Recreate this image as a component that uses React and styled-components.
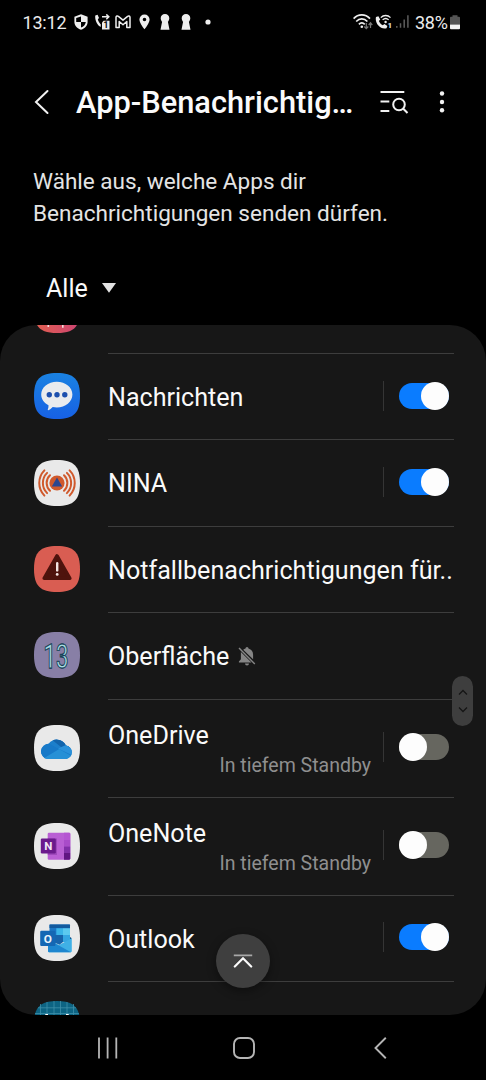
import styled, { createGlobalStyle } from 'styled-components'

const SQUIRCLE = 'M23 0C39.8 0 46 6.2 46 23S39.8 46 23 46 0 39.8 0 23 6.2 0 23 0Z'

const MessagesIcon = () => (
    <AppIcon viewBox="0 0 46 46">
        <defs>
            <linearGradient id="msg" x1="0" y1="0" x2="0" y2="1">
                <stop offset="0" stopColor="#1a82e2" />
                <stop offset="1" stopColor="#1761e4" />
            </linearGradient>
        </defs>
        <path d={SQUIRCLE} fill="url(#msg)" />
        <path d="M22.8 8.7c8.8 0 15.6 5.6 15.6 12.9s-6.8 12.9-15.6 12.9c-1.4 0-2.8-.1-4.1-.4-1.3 1.5-3 2.7-4.4 3.1-.6.1-.7-.4-.4-.9.5-1.2.7-2.7.6-4C10 30 7.2 26.3 7.2 21.6 7.2 14.3 14 8.7 22.8 8.7Z" fill="#e9ebee" />
        <g fill="#1c4fae">
            <circle cx="15.3" cy="21.7" r="2.7" />
            <circle cx="23" cy="21.7" r="2.7" />
            <circle cx="30.8" cy="21.7" r="2.7" />
        </g>
    </AppIcon>
)

const NinaIcon = () => (
    <AppIcon viewBox="0 0 46 46">
        <path d={SQUIRCLE} fill="#e9e9e9" />
        <g fill="none" stroke="#d0592c" strokeWidth="2" strokeLinecap="round">
            <path d="M10.4 10.4A18 18 0 0 0 10.4 35.6" />
            <path d="M13.1 12.9A14.2 14.2 0 0 0 13.1 33.1" />
            <path d="M16 15.3A10.5 10.5 0 0 0 16 30.7" />
            <path d="M35.6 10.4A18 18 0 0 1 35.6 35.6" />
            <path d="M32.9 12.9A14.2 14.2 0 0 1 32.9 33.1" />
            <path d="M30 15.3A10.5 10.5 0 0 1 30 30.7" />
        </g>
        <circle cx="23" cy="23" r="7.6" fill="#d0592c" />
        <path d="M23 17.6L28.2 26.6H17.8Z" fill="#2c468f" />
    </AppIcon>
)

const EmergencyIcon = () => (
    <AppIcon viewBox="0 0 46 46">
        <path d={SQUIRCLE} fill="#d95d52" />
        <path d="M23 10L35.8 32.3H10.2Z" fill="#4e130d" stroke="#4e130d" strokeWidth="3.6" strokeLinejoin="round" />
        <path d="M23.2 17.3V24.4" stroke="#f3e4e2" strokeWidth="2.4" strokeLinecap="round" />
        <circle cx="23.2" cy="28.4" r="1.4" fill="#f3e4e2" />
    </AppIcon>
)

const SystemUiIcon = () => (
    <AppIcon viewBox="0 0 46 46">
        <path d={SQUIRCLE} fill="#887fa6" />
        <g fontFamily="Roboto, sans-serif" fontSize="33" fontWeight="400" textAnchor="middle">
            <text x="22" y="35.6" textLength="25" lengthAdjust="spacingAndGlyphs" fill="#173f55" stroke="#173f55" strokeWidth="1.4">13</text>
            <text x="22" y="35.6" textLength="25" lengthAdjust="spacingAndGlyphs" fill="#a8dbe4" stroke="#173f55" strokeWidth=".8">13</text>
        </g>
    </AppIcon>
)

const OneDriveIcon = () => (
    <AppIcon viewBox="0 0 46 46">
        <defs>
            <clipPath id="cloud">
                <path d="M13.5 34A7.7 7.7 0 0 1 14.6 18.7 10.2 10.2 0 0 1 32 20.4 6.9 6.9 0 0 1 32.3 34Z" />
            </clipPath>
        </defs>
        <path d={SQUIRCLE} fill="#e9e9e9" />
        <g clipPath="url(#cloud)">
            <path d="M0 0H46V46H0Z" fill="#1c7fcb" />
            <path d="M12 10H36V25L27 22Z" fill="#1264ac" />
            <path d="M24 23.5L32 20 42 22V32Z" fill="#2a91da" />
            <path d="M10 33L25 24 39 32V36H10Z" fill="#2690d6" />
            <path d="M5 25L14 18 25 24 10 33Z" fill="#1779c8" />
        </g>
    </AppIcon>
)

const OneNoteIcon = () => (
    <AppIcon viewBox="0 0 46 46">
        <path d={SQUIRCLE} fill="#e9e9e9" />
        <rect x="13.7" y="9.7" width="22.6" height="27" rx="1.2" fill="#b95fd4" />
        <path d="M30 9.7h5.2a1.1 1.1 0 0 1 1.1 1.1V17H30Z" fill="#b556d2" />
        <path d="M30 17h6.3v6.5H30Z" fill="#a94cc9" />
        <path d="M30 23.5h6.3V30H30Z" fill="#812fa8" />
        <path d="M30 30h6.3v5.6a1.1 1.1 0 0 1-1.1 1.1H30Z" fill="#611583" />
        <path d="M13.7 15.5H23V32H13.7Z" fill="#8d3bab" opacity=".6" />
        <rect x="6.8" y="15.5" width="15" height="15" rx="1.2" fill="#6a1a8c" />
        <text x="14.3" y="27.1" fontFamily="Roboto, sans-serif" fontSize="11.5" fontWeight="700" textAnchor="middle" fill="#f1e6f5">N</text>
    </AppIcon>
)

const OutlookIcon = () => (
    <AppIcon viewBox="0 0 46 46">
        <path d={SQUIRCLE} fill="#e9e9e9" />
        <path d="M15.5 10.6a1 1 0 0 1 1-1H35a1 1 0 0 1 1 1V25H15.5Z" fill="#1b76c4" />
        <path d="M15.5 9.6H36V13H15.5Z" fill="#125a9e" />
        <path d="M22.3 13.2H29V20H22.3Z" fill="#3ab4e8" />
        <path d="M29 13.2H36V20H29Z" fill="#5cc9ef" />
        <path d="M29 20H36V27H29Z" fill="#35a6e2" />
        <path d="M36 22L37.8 23.2 36 24.4Z" fill="#114a80" />
        <path d="M14 24.5L25 30 37.8 23.2V36a1.2 1.2 0 0 1-1.2 1.2H15.2A1.2 1.2 0 0 1 14 36Z" fill="#3fb0e6" />
        <path d="M14 24.5L37 37.2H15.2A1.2 1.2 0 0 1 14 36Z" fill="#1e86cf" />
        <path d="M19 20H29V27L25.5 29.8 19 27Z" fill="#1764ac" />
        <rect x="6.2" y="15.7" width="15.2" height="15.2" rx="1.2" fill="#1467b4" />
        <text x="13.8" y="27.5" fontFamily="Roboto, sans-serif" fontSize="11.8" fontWeight="700" textAnchor="middle" fill="#eaf3fa">O</text>
    </AppIcon>
)

// only the lower edge of this one is visible above the first divider
const GalleryIcon = () => (
    <AppIcon viewBox="0 0 46 46">
        <defs>
            <linearGradient id="pink" x1="0" y1="0" x2="1" y2="0">
                <stop offset="0" stopColor="#e2604f" />
                <stop offset="1" stopColor="#cc4473" />
            </linearGradient>
        </defs>
        <path d={SQUIRCLE} fill="url(#pink)" />
        <path d="M14.3 37V40M28.8 36V40.8" stroke="#f4dede" strokeWidth="1.6" />
    </AppIcon>
)

const GridIcon = () => (
    <AppIcon viewBox="0 0 46 46">
        <path d={SQUIRCLE} fill="#0d6483" />
        <path d="M6.5 3V20M13 1V20M20 0V20M26.5 0V20M33 1V20M39.5 3V20M4 6.8H42M1 12.5H45" stroke="#3f8fa9" strokeWidth=".8" />
        <path d="M11.3 13.6H14M32 13.6H34.7" stroke="#fff" strokeWidth="1.3" />
    </AppIcon>
)

const MutedBell = () => (
    <Bell viewBox="0 0 18 20">
        <path d="M7.5 2.6a1.5 1.5 0 0 1 3 0c3 .8 4.6 3.2 4.6 6.1v4.5L5.2 3.7c.7-.5 1.4-.9 2.3-1.1ZM2.9 6.1L13.5 16.5H.9v-1.1L2.9 13.2ZM7 17.5h4a2 2 0 0 1-4 0Z" fill="#858585" />
        <path d="M1 2L16.8 18" stroke="#858585" strokeWidth="1.4" />
    </Bell>
)

const apps = [
    { name: 'Nachrichten', icon: MessagesIcon, on: true },
    { name: 'NINA', icon: NinaIcon, on: true },
    { name: 'Notfallbenachrichtigungen für..', icon: EmergencyIcon },
    { name: 'Oberfläche', icon: SystemUiIcon, muted: true },
    { name: 'OneDrive', icon: OneDriveIcon, on: false, note: 'In tiefem Standby' },
    { name: 'OneNote', icon: OneNoteIcon, on: false, note: 'In tiefem Standby' },
    { name: 'Outlook', icon: OutlookIcon, on: true },
]

const AppRow = ({ app }) => {
    const Icon = app.icon
    return <Row $tall={!!app.note}>
        <Icon />
        <RowBody>
            <Texts $tall={!!app.note}>
                <Name>{app.name}{app.muted && <MutedBell />}</Name>
                {app.note && <Note>{app.note}</Note>}
            </Texts>
            {app.on !== undefined && <SwitchArea>
                <Switch $on={app.on}><Thumb /></Switch>
            </SwitchArea>}
        </RowBody>
    </Row>
}

const Keyhole = ({ gap }) => (
    <Glyph $w={10} $gap={gap} viewBox="0 0 10 16">
        <path d="M5 0C7.5 0 9.3 1.9 9.3 4.200 9.300 5.800 8.500 7 7.900 7.700L9.500 15.800H.5L2.100 7.700C1.500 7 .7 5.800 .7 4.200 .7 1.900 2.500 0 5 0Z" fill="#eee" />
    </Glyph>
)

const StatusBar = () => (
    <Status>
        <Clock>13:12</Clock>
        <Glyph $w={14} $gap={7} viewBox="0 0 14 16">
            <path d="M7 .3L13.6 2.7V8c0 3.7-2.8 6.5-6.6 7.7C3.2 14.5.4 11.7.4 8V2.700Z" fill="#eee" />
            <path d="M7 2.5V8H2.2V4ZM7 8H11.8c-.3 2.6-2.2 4.6-4.8 5.6Z" fill="#000" />
        </Glyph>
        <Glyph $w={15} $gap={7} viewBox="0 0 15 16">
            <path d="M.3 1.5L2.6.8 4 3.9 2.8 5.3c.5 2 1.5 3.7 3 5.2L5.7 13C2.3 11.3-.4 6 .3 1.5Z" fill="#eee" />
            <path d="M7 2.8H13.5M11.3.4L13.8 2.8 11.3 5.2" fill="none" stroke="#eee" strokeWidth="1.5" />
            <path d="M7 8.5L8.5 6.8H14.5V15.5H7Z" fill="#eee" />
            <text x="10.9" y="14.3" fontFamily="Roboto, sans-serif" fontSize="8.5" fontWeight="700" textAnchor="middle" fill="#000">1</text>
        </Glyph>
        <Glyph $w={16} $gap={5} viewBox="0 0 16 16">
            <path d="M1 13.5V3.2C1 2 2.5 1.6 3.4 2.4L8 6.2l4.6-3.8C13.5 1.6 15 2 15 3.2V13.5H11.8V7.5L8 10.7 4.2 7.5v6Z" fill="none" stroke="#eee" strokeWidth="1.5" strokeLinejoin="round" />
        </Glyph>
        <Glyph $w={11} $gap={8} viewBox="0 0 11 16">
            <path fillRule="evenodd" d="M5.5.4a5.1 5.1 0 0 1 5.1 5.1c0 3.7-5.1 9.8-5.1 9.8S.4 9.2.4 5.500A5.100 5.100 0 0 1 5.500.4Zm0 3.300a1.800 1.800 0 1 0 0 3.600 1.800 1.800 0 0 0 0-3.600Z" fill="#eee" />
        </Glyph>
        <Keyhole gap={10} />
        <Keyhole gap={11} />
        <Glyph $w={6} $gap={14} viewBox="0 0 6 16">
            <circle cx="3" cy="8" r="2.6" fill="#eee" />
        </Glyph>
        <Spacer />
        <Glyph $w={20} viewBox="0 0 20 16">
            <g fill="none" stroke="#eee" strokeWidth="1.7">
                <path d="M.6 4.6C5.2-.4 12.3-.4 17 4.6" />
                <path d="M3.2 7.5c3.3-3.4 7.9-3.4 11.2 0" />
                <path d="M5.9 10.3c1.7-1.8 4.1-1.8 5.8 0" />
            </g>
            <circle cx="8.8" cy="12.7" r="1.3" fill="#eee" />
            <path d="M13.3 9V14.5M11.3 12.5L13.3 14.7 15.3 12.5M17.5 14V9M15.7 11L17.5 8.8 19.3 11" fill="none" stroke="#777" strokeWidth="1.2" />
        </Glyph>
        <Glyph $w={17} $gap={2} viewBox="0 0 17 16">
            <path d="M1 3L3.4 2.2 5.2 5.5 3.9 7c.7 1.9 2 3.4 3.9 4.3L9.4 10l3 2-.9 2.2C5.5 16-.5 9 1 3Z" fill="#eee" />
            <g fill="none" stroke="#eee" strokeWidth="1.3">
                <path d="M5.800 3.600c2.700-2.800 7-2.800 9.700 0" />
                <path d="M7.600 5.900c1.800-1.700 4.300-1.700 6.100 0" />
            </g>
            <circle cx="10.6" cy="8" r="1.2" fill="#eee" />
            <text x="14.8" y="14" fontFamily="Roboto, sans-serif" fontSize="8" fontWeight="700" textAnchor="middle" fill="#eee">1</text>
        </Glyph>
        <Glyph $w={13} $gap={4} viewBox="0 0 13 16">
            <path d="M.8 12V13.8M4.5 9.3V13.8M8.2 5.5V13.8M11.9 1.3V13.8" stroke="#5c5c5c" strokeWidth="1.5" />
        </Glyph>
        <Percent>38%</Percent>
        <Glyph $w={10} $gap={2} viewBox="0 0 10 16">
            <path d="M2.5 1.2h5v1.500H9A1 1 0 0 1 10 3.700V10.500H0V3.700A1 1 0 0 1 1 2.700H2.500Z" fill="#555" />
            <path d="M0 10.5H10V14.2a1 1 0 0 1-1 1H1A1 1 0 0 1 0 14.2Z" fill="#f4f4f4" />
        </Glyph>
    </Status>
)

const App = () => {
    return <Screen>
        <GlobalStyle />
        <StatusBar />
        <Header>
            <HeaderIcon $w={16} $h={28} viewBox="0 0 16 28">
                <path d="M14.500 2L3 13 14.500 24" fill="none" stroke="#f2f2f2" strokeWidth="2" strokeLinecap="round" />
            </HeaderIcon>
            <Title>App-Benachrichtig…</Title>
            <HeaderIcon $w={30} $h={26} viewBox="0 0 30 26">
                <g fill="none" stroke="#f2f2f2" strokeWidth="2">
                    <path d="M1.5 2H25.3M1.5 11.5H10.3M1.5 21H10.3" />
                    <circle cx="20" cy="14.5" r="5.8" />
                    <path d="M24.3 18.8L28.5 23" />
                </g>
            </HeaderIcon>
            <HeaderIcon $w={6} $h={26} viewBox="0 0 6 26">
                <g fill="#f2f2f2">
                    <circle cx="3" cy="3.5" r="2.2" />
                    <circle cx="3" cy="12" r="2.2" />
                    <circle cx="3" cy="20.2" r="2.2" />
                </g>
            </HeaderIcon>
        </Header>
        <Description>Wähle aus, welche Apps dir<br />Benachrichtigungen senden dürfen.</Description>
        <Filter>
            Alle
            <Caret viewBox="0 0 14 10"><path d="M0 0H14L7 9.7Z" fill="#e2e2e2" /></Caret>
        </Filter>
        <Panel>
            <List>
                <Row><GalleryIcon /><RowBody /></Row>
                {apps.map(app => <AppRow key={app.name} app={app} />)}
                <Row><GridIcon /><RowBody /></Row>
            </List>
            <ScrollHandle>
                <svg width="10" height="30" viewBox="0 0 10 30">
                    <path d="M1 8.5L5 4.5 9 8.5M1 21.5L5 25.5 9 21.5" fill="none" stroke="#151515" strokeWidth="1.3" />
                </svg>
            </ScrollHandle>
            <ToTop>
                <svg width="20" height="14" viewBox="0 0 20 14">
                    <path d="M.8 1.3H19.2" stroke="#a8a8a8" strokeWidth="1.8" />
                    <path d="M1.8 12.5L10 4.3 18.2 12.5" fill="none" stroke="#fafafa" strokeWidth="2.2" strokeLinecap="round" />
                </svg>
            </ToTop>
        </Panel>
        <NavBar>
            <svg width="22" height="22" viewBox="0 0 22 22">
                <path d="M2 .5V21.5M10.6 .5V21.5M19.3 .5V21.5" stroke="#b5b5b5" strokeWidth="1.8" />
            </svg>
            <HomeButton viewBox="0 0 22 22">
                <rect x="1" y="1" width="20" height="20" rx="6" fill="none" stroke="#b5b5b5" strokeWidth="1.9" />
            </HomeButton>
            <svg width="14" height="22" viewBox="0 0 14 22">
                <path d="M12.8 .8L2.5 11 12.8 21.2" fill="none" stroke="#b5b5b5" strokeWidth="1.9" />
            </svg>
        </NavBar>
    </Screen>
}

export default App;

const GlobalStyle = createGlobalStyle`
    body {
        margin: 0;
        background: #000;
    }

    svg {
        display: block;
        flex-shrink: 0;
    }
`

const Screen = styled.div`
    width: 486px;
    height: 1080px;
    overflow: hidden;
    display: flex;
    flex-direction: column;
    background: #000;
    color: #fafafa;
    font-family: Roboto, sans-serif;
`

const Status = styled.div`
    height: 44px;
    box-sizing: border-box;
    padding: 0 26px 0 22.5px;
    display: flex;
    align-items: center;
    color: #ececec;
    font-size: 18px;
`

const Clock = styled.span`
    width: 44.5px;
    white-space: nowrap;
    letter-spacing: -0.2px;
`

const Percent = styled.span`
    width: 33px;
    margin-left: 6px;
    white-space: nowrap;
    letter-spacing: -0.3px;
`

const Glyph = styled.svg`
    width: ${({ $w }) => $w}px;
    height: 16px;
    margin-left: ${({ $gap }) => $gap || 0}px;
`

const Spacer = styled.div`
    flex: 1;
`

const Header = styled.header`
    height: 117px;
    box-sizing: border-box;
    padding: 0 41px 0 33px;
    display: flex;
    align-items: center;
`

const HeaderIcon = styled.svg`
    width: ${({ $w }) => $w}px;
    height: ${({ $h }) => $h}px;

    & + & {
        margin-left: 30px;
    }
`

const Title = styled.h1`
    margin: 0 0 0 27px;
    width: 303px;
    font-size: 30.8px;
    font-weight: 500;
    white-space: nowrap;
`

const Description = styled.p`
    margin: 5px 0 0;
    padding: 0 33px;
    height: 64px;
    font-size: 22.55px;
    line-height: 32px;
    color: #e4e4e4;
    white-space: nowrap;
`

const Filter = styled.div`
    height: 95px;
    box-sizing: border-box;
    padding: 21px 0 0 46px;
    display: flex;
    align-items: center;
    gap: 14px;
    font-size: 25px;
`

const Caret = styled.svg`
    width: 14px;
    height: 10px;
`

const Panel = styled.main`
    position: relative;
    height: 690px;
    border-radius: 36px;
    background: #171717;
    overflow: hidden;
`

// scrolled so that the first row is cut off at the top
const List = styled.div`
    margin-top: -57.4px;
    padding: 0 32px 0 34px;
`

const Row = styled.div`
    height: ${({ $tall }) => ($tall ? 98 : 86.4)}px;
    display: flex;
    align-items: center;
    gap: 28px;
`

const AppIcon = styled.svg`
    width: 46px;
    height: 46px;
    margin: 0 0.4px 2px -0.4px;
`

const RowBody = styled.div`
    flex: 1;
    min-width: 0;
    height: 100%;
    box-sizing: border-box;
    border-bottom: 1px solid #3d3d3d;
    display: flex;
    align-items: center;
`

const Texts = styled.div`
    flex: 1;
    padding-top: ${({ $tall }) => ($tall ? 6.5 : 2.5)}px;
    display: flex;
    flex-direction: column;
`

const Name = styled.div`
    display: flex;
    align-items: center;
    gap: 9px;
    font-size: 25.1px;
    line-height: 30px;
    white-space: nowrap;
`

const Note = styled.div`
    padding-right: 12px;
    font-size: 19.5px;
    line-height: 30px;
    color: #8f8f8f;
    text-align: right;
    white-space: nowrap;
`

const Bell = styled.svg`
    width: 18px;
    height: 20px;
    margin-bottom: 3px;
`

const SwitchArea = styled.div`
    width: 71px;
    height: 30px;
    box-sizing: border-box;
    margin-bottom: 2px;
    padding-right: 5px;
    border-left: 1px solid #353535;
    display: flex;
    align-items: center;
    justify-content: flex-end;
`

const Switch = styled.div`
    width: 50px;
    height: 26px;
    border-radius: 13px;
    background: ${({ $on }) => ($on ? '#0a7cff' : '#66665f')};
    display: flex;
    align-items: center;
    justify-content: ${({ $on }) => ($on ? 'flex-end' : 'flex-start')};
`

const Thumb = styled.div`
    width: 28px;
    height: 28px;
    flex-shrink: 0;
    border-radius: 50%;
    background: #fdfdfd;
`

const ScrollHandle = styled.div`
    position: absolute;
    top: 351px;
    right: 13px;
    width: 21px;
    height: 50px;
    border-radius: 11px;
    background: #3e3e3e;
    display: flex;
    align-items: center;
    justify-content: center;
`

const ToTop = styled.div`
    position: absolute;
    bottom: 27px;
    left: 216px;
    width: 54px;
    height: 54px;
    border-radius: 50%;
    background: #3f3f3f;
    box-shadow: 0 3px 10px rgba(0, 0, 0, 0.4);
    display: flex;
    align-items: center;
    justify-content: center;
`

const NavBar = styled.nav`
    flex: 1;
    padding: 1px 99px 0 97px;
    display: flex;
    align-items: center;
    justify-content: space-between;
`

const HomeButton = styled.svg`
    width: 22px;
    height: 22px;
    margin-right: 4px;
`
